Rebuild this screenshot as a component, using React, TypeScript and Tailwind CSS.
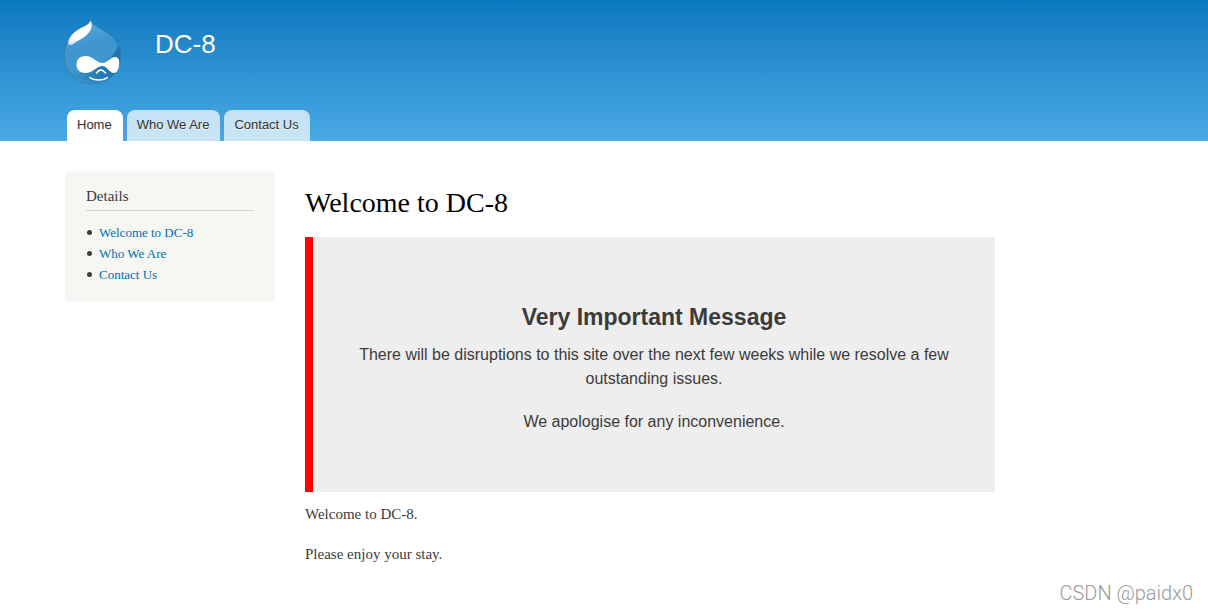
import React from "react";

interface NavLink {
	label: string;
	href: string;
}

const tabs: NavLink[] = [
	{ label: "Home", href: "#home" },
	{ label: "Who We Are", href: "#who-we-are" },
	{ label: "Contact Us", href: "#contact-us" },
];

const details: NavLink[] = [
	{ label: "Welcome to DC-8", href: "#home" },
	{ label: "Who We Are", href: "#who-we-are" },
	{ label: "Contact Us", href: "#contact-us" },
];

const dropPath =
	"M26.500 0C28.500 5 34 7 39 10C49 15.500 56.700 24 56.700 35.500C56.700 53 44 63.500 28.500 63.500C12.500 63.500 0 52 0 36C0 24 7 16 14.500 11C21 7 25.500 5.500 26.500 0Z";

const Logo = () => (
	<svg
		viewBox="0 0 58 65"
		className="h-[65px] w-[58px] overflow-visible"
		aria-hidden="true"
	>
		<defs>
			<linearGradient id="drop" x1="0" y1="0" x2="0.3" y2="1">
				<stop offset="0" stopColor="#66afde" />
				<stop offset="0.45" stopColor="#3f97d0" />
				<stop offset="1" stopColor="#3f95cd" />
			</linearGradient>
			<linearGradient id="shade" x1="0" y1="0" x2="1" y2="0">
				<stop offset="0" stopColor="#1f78b3" stopOpacity="0.1" />
				<stop offset="0.45" stopColor="#1f78b3" stopOpacity="0.75" />
				<stop offset="1" stopColor="#1b70a9" />
			</linearGradient>
			<linearGradient id="shine" x1="0" y1="1" x2="1" y2="0">
				<stop offset="0" stopColor="#fff" stopOpacity="0.7" />
				<stop offset="0.3" stopColor="#fff" />
				<stop offset="1" stopColor="#fff" />
			</linearGradient>
			<clipPath id="dropClip">
				<path d={dropPath} />
			</clipPath>
		</defs>
		<g clipPath="url(#dropClip)">
			<rect width="58" height="65" fill="url(#drop)" />
			<path
				d="M55 22C53 32 46 39 39 44C31 50 20 54 8 53C16 61 27 63 36 61.500C46 60 54 53 58 44V22Z"
				fill="url(#shade)"
			/>
		</g>
		<path
			d={dropPath}
			fill="none"
			stroke="#33759f"
			strokeOpacity="0.75"
			strokeWidth="1"
		/>
		<path
			d="M26.500 0.500C28.500 5 28 9.500 24 13.500C19 19 13 21 9 24C6.500 25.500 4 25 4 22.500C5 16 11 11.500 16 8.500C21 6 25 5 26.500 0.500Z"
			fill="url(#shine)"
		/>
		<path
			d="M21.500 36C28.500 36 33 43 38.700 43C43.500 43 46 37 51 37C54 37 55.500 39.500 55.200 43.500C55 49 53 53 50 53C45.500 53 42.500 46 38.700 46C32.500 46 29 53 21.500 53C16 53 12.500 49.500 12.500 44.500C12.500 39.500 16 36 21.500 36Z"
			fill="#fff"
		/>
		<path
			d="M32.500 53C34 50.800 35.500 50 37.500 50C39.500 50 40 52.500 41.500 52.700M26 57.500C30 60.700 39 61 43.300 57.500"
			fill="none"
			stroke="#fff"
			strokeWidth="1.6"
			strokeLinecap="round"
		/>
	</svg>
);

const Header = () => (
	<header className="bg-linear-to-b from-[#0779bf] to-[#48a9e4] px-16 pt-5">
		<div className="flex gap-[33px]">
			<a href="#home" aria-label="Home">
				<Logo />
			</a>
			<a
				href="#home"
				className="mt-2 h-8 text-[26px] leading-8 text-[#fffeff]"
			>
				DC-8
			</a>
		</div>
		<nav className="mt-[25px] ml-[3px] flex gap-1">
			{tabs.map((tab, index) => (
				<a
					key={tab.label}
					href={tab.href}
					className={`rounded-t-lg pt-[5px] pr-[11px] pb-[6px] pl-[10px] text-[13px] leading-5 text-[#333] text-shadow-[0_1px_0_#eee] ${
						index === 0 ? "bg-white" : "bg-white/70"
					}`}
				>
					{tab.label}
				</a>
			))}
		</nav>
	</header>
);

const Sidebar = () => (
	<aside className="w-[210px] shrink-0 border border-[#f9f9f9] bg-[#f6f6f2] px-5 pt-[14px] pb-4">
		<h2 className="border-b border-[#d6d6d6] pb-1 text-[15px] leading-5">
			Details
		</h2>
		<ul className="mt-[11px] text-[13px] leading-[21px]">
			{details.map((item) => (
				<li key={item.label} className="flex items-center gap-[7px]">
					<span className="ml-[1px] size-[5px] rounded-full bg-[#3b3b3b]" />
					<a href={item.href} className="text-[#0071b3]">
						{item.label}
					</a>
				</li>
			))}
		</ul>
	</aside>
);

const Message = () => (
	<section className="mt-4 border-l-8 border-[#f00] bg-[#eee] px-10 pt-16 pb-[58px] text-center font-['Liberation_Sans',sans-serif] text-base leading-6">
		<h2 className="text-[23px] leading-8 font-bold">
			Very Important Message
		</h2>
		<p className="mt-[10px]">
			There will be disruptions to this site over the next few weeks while we
			resolve a few outstanding issues.
		</p>
		<p className="mt-[19px]">We apologise for any inconvenience.</p>
	</section>
);

export default function App() {
	return (
		<div className="relative min-h-screen bg-white font-['Liberation_Sans',sans-serif] text-[#3b3b3b]">
			<Header />
			<div className="flex items-start gap-[30px] px-[65px] pt-[30px] pb-12 font-['Liberation_Serif',serif]">
				<Sidebar />
				<main className="max-w-[690px] flex-1 pt-[14px]">
					<h1 className="text-[28px] leading-9 text-black">
						Welcome to DC-8
					</h1>
					<Message />
					<p className="mt-3 text-[15px] leading-5">Welcome to DC-8.</p>
					<p className="mt-5 text-[15px] leading-5">
						Please enjoy your stay.
					</p>
				</main>
			</div>
			<span className="absolute right-[15px] bottom-2 font-['Roboto',sans-serif] text-[20px] leading-6 font-light text-[#999]">
				CSDN @paidx0
			</span>
		</div>
	);
}
